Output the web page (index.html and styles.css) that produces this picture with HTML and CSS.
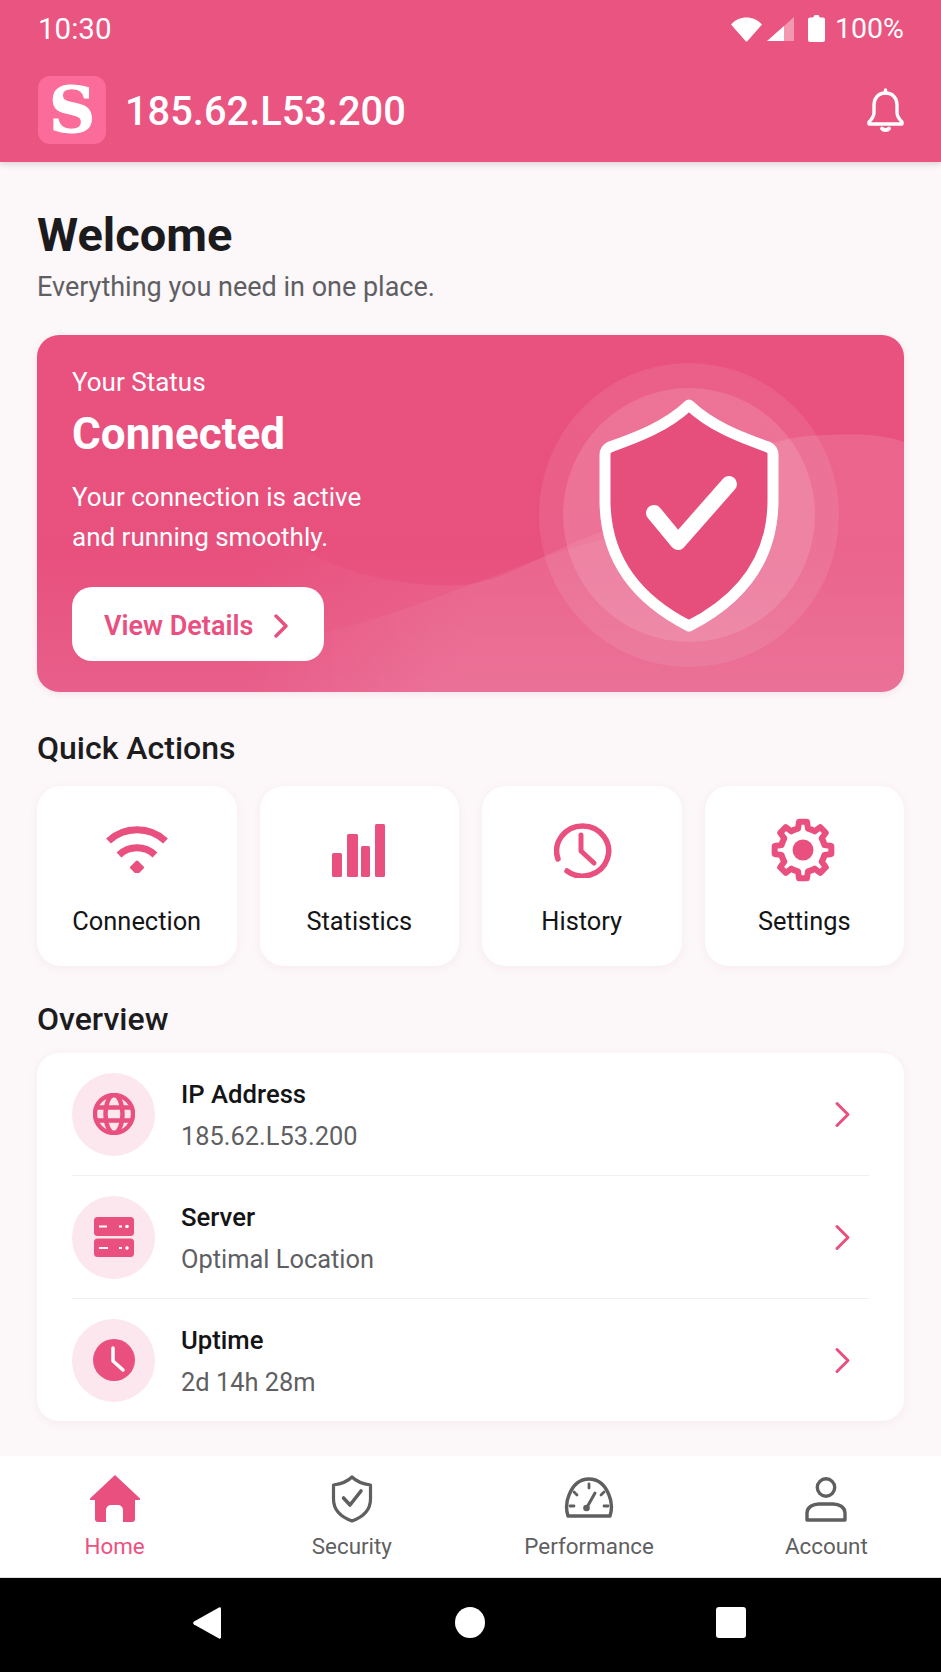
FILE: index.html
```html
<!DOCTYPE html>
<html lang="en">
<head>
<meta charset="utf-8">
<title>Home</title>
<link rel="stylesheet" href="styles.css">
</head>
<body>
<div class="app">
  <header class="top">
    <div class="status">
      <span class="status-text status-time">10:30</span>
      <div class="status-right">
        <svg class="ic-wifi" viewBox="0 0 31 25"><path fill="#fff" d="M0 7.500C4 3 9.500 .5 15.500 .5S27 3 31 7.500L16.500 24a1.300 1.300 0 0 1-2 0Z"/></svg>
        <svg class="ic-signal" viewBox="0 0 27 24"><path fill="#fff" fill-opacity=".4" d="M27 0v24H17V9Z"/><path fill="#fff" d="M17 9v15H0Z"/></svg>
        <svg class="ic-battery" viewBox="0 0 17 27"><path fill="#fff" d="M5 2.500a1 1 0 0 1 1-1V1a1 1 0 0 1 1-1h3a1 1 0 0 1 1 1v.5a1 1 0 0 1 1 1h3a2 2 0 0 1 2 2V25a2 2 0 0 1-2 2H2a2 2 0 0 1-2-2V4.500a2 2 0 0 1 2-2Z"/></svg>
        <span class="status-text">100%</span>
      </div>
    </div>
    <div class="appbar">
      <div class="logo">S</div>
      <div class="ip">185.62.L53.200</div>
      <svg class="ic-bell" viewBox="0 0 37 44" fill="none" stroke="#fff" stroke-width="3.400" stroke-linejoin="round" stroke-linecap="round"><path d="M18.500 5C11 5 7 10.500 7 17v7.500c0 4-2 6.500-5 9.500v2h33v-2c-3-3-5-5.500-5-9.500V17c0-6.500-4-12-11.500-12Z"/><path d="M18.500 2v3"/><path d="M15 40.500c1.500 2 5.500 2 7 0" stroke-width="3.800"/></svg>
    </div>
  </header>

  <main class="main">
    <h1 class="welcome">Welcome</h1>
    <p class="sub">Everything you need in one place.</p>

    <section class="hero">
      <svg class="hero-art" viewBox="0 0 867 357" preserveAspectRatio="none">
        <defs>
          <linearGradient id="wave-fade" x1="0" y1="0" x2="1" y2="0">
            <stop offset="0" stop-color="#fff" stop-opacity="0"/>
            <stop offset=".35" stop-color="#fff" stop-opacity=".07"/>
            <stop offset="1" stop-color="#fff" stop-opacity=".07"/>
          </linearGradient>
          <linearGradient id="wave-fade-low" x1="0" y1="0" x2="1" y2="0">
            <stop offset=".25" stop-color="#fff" stop-opacity="0"/>
            <stop offset=".45" stop-color="#fff" stop-opacity=".05"/>
            <stop offset="1" stop-color="#fff" stop-opacity=".05"/>
          </linearGradient>
        </defs>
        <path fill="url(#wave-fade)" d="M200 357V200C240 205 265 215 283 223C330 245 380 252 425 250C470 246 510 215 570 195C640 170 690 100 790 100C820 98 850 100 867 107V357Z"/>
        <path fill="url(#wave-fade-low)" d="M0 357C100 345 200 320 288 297C400 270 470 230 563 205C640 175 700 100 790 100C820 98 850 100 867 107V357Z"/>
        <ellipse cx="652" cy="180" rx="150" ry="152" fill="#fff" fill-opacity=".09"/>
        <ellipse cx="652" cy="180" rx="126" ry="127" fill="#fff" fill-opacity=".12"/>
        <path fill="#E64E7C" stroke="#fff" stroke-width="11" stroke-linejoin="round" d="M652 70C630 91 601 102 573 112C569 114 568 116 568 120V165C568 220 595 262 652 291C709 262 736 220 736 165V120C736 116 735 114 731 112C703 102 674 91 652 70Z"/>
        <path fill="none" stroke="#fff" stroke-width="16" stroke-linejoin="round" stroke-linecap="round" d="M617 178L641 207L692 149"/>
      </svg>
      <div class="hero-body">
        <div class="hero-label">Your Status</div>
        <h2 class="hero-title">Connected</h2>
        <p class="hero-desc">Your connection is active<br>and running smoothly.</p>
        <a class="hero-btn">View Details
          <svg class="ic-btn-chev" viewBox="0 0 16 24" fill="none" stroke="#E9507F" stroke-width="3.400" stroke-linecap="round" stroke-linejoin="round"><path d="M3 2l10 10L3 22"/></svg>
        </a>
      </div>
    </section>

    <h3 class="section-title quick">Quick Actions</h3>
    <div class="actions">
      <div class="action">
        <div class="action-icon">
          <svg class="ic-a-wifi" viewBox="0 0 62 47" fill="none" stroke="#E9507F" stroke-width="7"><path d="M2.500 15A42 42 0 0 1 59.500 15"/><path d="M13 29A26 26 0 0 1 49 29"/><path fill="#E9507F" stroke="#E9507F" stroke-width="3" stroke-linejoin="round" d="M31 36l5.500 5.500-5.500 5.500-5.500-5.500Z"/></svg>
        </div>
        <span class="action-label">Connection</span>
      </div>
      <div class="action">
        <div class="action-icon">
          <svg class="ic-a-bars" viewBox="0 0 53 53" fill="#E9507F"><rect y="29" width="10" height="24" rx="1.500"/><rect x="15" y="10" width="11" height="43" rx="1.500"/><rect x="29" y="22" width="9" height="31" rx="1.500"/><rect x="43" width="10" height="53" rx="1.500"/></svg>
        </div>
        <span class="action-label">Statistics</span>
      </div>
      <div class="action">
        <div class="action-icon">
          <svg class="ic-a-clock" viewBox="0 0 58 56" fill="none" stroke="#E9507F" stroke-width="5.500" stroke-linecap="round" stroke-linejoin="round"><path d="M4 37A26 25 0 1 1 13 49"/><path d="M27 13v16l13 12" stroke-width="5"/></svg>
        </div>
        <span class="action-label">History</span>
      </div>
      <div class="action">
        <div class="action-icon">
          <svg class="ic-a-gear" viewBox="0 0 60 60">
            <defs><path id="gear-seg" fill="none" stroke="#E9507F" stroke-width="5.500" stroke-linejoin="round" stroke-linecap="round" d="M22.350 11.520L25.500 10.510L26.380 4.250H33.620L34.500 10.510L37.650 11.520"/></defs>
            <use href="#gear-seg"/>
            <use href="#gear-seg" transform="rotate(45 30 30)"/>
            <use href="#gear-seg" transform="rotate(90 30 30)"/>
            <use href="#gear-seg" transform="rotate(135 30 30)"/>
            <use href="#gear-seg" transform="rotate(180 30 30)"/>
            <use href="#gear-seg" transform="rotate(225 30 30)"/>
            <use href="#gear-seg" transform="rotate(270 30 30)"/>
            <use href="#gear-seg" transform="rotate(315 30 30)"/>
            <circle cx="30" cy="30" r="9.500" fill="#E9507F"/>
          </svg>
        </div>
        <span class="action-label">Settings</span>
      </div>
    </div>

    <h3 class="section-title over">Overview</h3>
    <div class="list">
      <div class="row">
        <div class="row-icon">
          <svg class="ic-r" viewBox="0 0 42 42" fill="none" stroke="#E9507F" stroke-width="4.400"><circle cx="21" cy="21" r="19"/><ellipse cx="21" cy="21" rx="8.500" ry="19"/><path d="M3.500 14.500h35M3.500 27.500h35"/></svg>
        </div>
        <div class="row-text"><div class="row-title">IP Address</div><div class="row-value">185.62.L53.200</div></div>
        <svg class="ic-chev" viewBox="0 0 17 27" fill="none" stroke="#E9507F" stroke-width="3" stroke-linecap="round" stroke-linejoin="round"><path d="M3 2.500l11 11-11 11"/></svg>
      </div>
      <div class="row">
        <div class="row-icon">
          <svg class="ic-r" viewBox="0 0 42 42"><rect x="1" y="1" width="40" height="19" rx="3.500" fill="#E9507F"/><rect x="1" y="22.500" width="40" height="18.500" rx="3.500" fill="#E9507F"/><path d="M6 10.500h8M26 10.500h3M6 32h9M26 32h3" stroke="#fff" stroke-width="2" fill="none"/><circle cx="34" cy="10.500" r="1.800" fill="#fff"/><circle cx="34" cy="32" r="1.800" fill="#fff"/></svg>
        </div>
        <div class="row-text"><div class="row-title">Server</div><div class="row-value">Optimal Location</div></div>
        <svg class="ic-chev" viewBox="0 0 17 27" fill="none" stroke="#E9507F" stroke-width="3" stroke-linecap="round" stroke-linejoin="round"><path d="M3 2.500l11 11-11 11"/></svg>
      </div>
      <div class="row">
        <div class="row-icon">
          <svg class="ic-r" viewBox="0 0 42 42"><circle cx="21" cy="21" r="21" fill="#E9507F"/><path d="M20 9v13l10 9" fill="none" stroke="#fff" stroke-width="3.500" stroke-linecap="round" stroke-linejoin="round"/></svg>
        </div>
        <div class="row-text"><div class="row-title">Uptime</div><div class="row-value">2d 14h 28m</div></div>
        <svg class="ic-chev" viewBox="0 0 17 27" fill="none" stroke="#E9507F" stroke-width="3" stroke-linecap="round" stroke-linejoin="round"><path d="M3 2.500l11 11-11 11"/></svg>
      </div>
    </div>
  </main>

  <nav class="tabs">
    <div class="tab tab-active">
      <svg class="tab-icon" viewBox="0 0 50 48"><path fill="#E9507F" d="M25 0L49.500 23a1 1 0 0 1-.8 2H45V44a3 3 0 0 1-3 3H33V35a5 5 0 0 0-5-5H21a5 5 0 0 0-5 5V47H8a3 3 0 0 1-3-3V25H1.300a1 1 0 0 1-.8-2Z"/></svg>
      <span>Home</span>
    </div>
    <div class="tab">
      <svg class="tab-icon" viewBox="0 0 50 48" fill="none" stroke="#5F5F62" stroke-width="3.200" stroke-linejoin="round" stroke-linecap="round"><path d="M25 2C20 7 14 9 6.500 10V24C6.500 35 14 42 25 46C36 42 43.500 35 43.500 24V10C36 9 30 7 25 2Z"/><path d="M16.500 23l6.500 7 11-14" stroke-width="3.600"/></svg>
      <span>Security</span>
    </div>
    <div class="tab">
      <svg class="tab-icon" viewBox="0 0 50 48" fill="none" stroke="#5F5F62" stroke-width="3.400" stroke-linejoin="round" stroke-linecap="round"><path d="M4 41C1.500 33 2 27 5 20C9 10 16 4 25 4S41 10 45 20C48 27 48.500 33 46 41Z"/><path d="M25 9v4M10 17l3 3M40 17l-3 3M6 31h4M40 31h4" stroke-width="2.800"/><path d="M22 34L31 18" stroke-width="3"/><circle cx="22.500" cy="33" r="3.300" fill="#5F5F62" stroke="none"/></svg>
      <span>Performance</span>
    </div>
    <div class="tab">
      <svg class="tab-icon" viewBox="0 0 50 48" fill="none" stroke="#5F5F62" stroke-width="3.400" stroke-linejoin="round"><circle cx="25" cy="12.500" r="8.700"/><path d="M6 45V38C6 32 12 29 18 29H32C38 29 44 32 44 38V45Z"/></svg>
      <span>Account</span>
    </div>
  </nav>

  <div class="sysnav">
    <svg class="sys-back" viewBox="0 0 28 32"><path fill="#fff" d="M26 .5a1.500 1.500 0 0 1 2 1.200V30.300a1.500 1.500 0 0 1-2 1.200L1 17.500a2 2 0 0 1 0-3Z"/></svg>
    <span class="sys-home"></span>
    <span class="sys-recent"></span>
  </div>
</div>
</body>
</html>
```

FILE: styles.css
```css
* { box-sizing: border-box; }
html, body { margin: 0; padding: 0; }
body { font-family: Roboto, "Liberation Sans", sans-serif; background: #FCF7F9; color: #1C1C1E; }
h1, h2, h3, p { margin: 0; font-weight: inherit; }

.app { width: 941px; height: 1672px; display: flex; flex-direction: column; overflow: hidden; }

.top { height: 162px; background: #E95480; color: #fff; box-shadow: 0 2px 6px rgba(120, 60, 80, .22); position: relative; z-index: 2; flex: none; }
.status { height: 58px; padding: 0 37px 0 38px; display: flex; align-items: center; justify-content: space-between; }
.status-text { font-size: 28.500px; line-height: 32px; }
.status-time { font-size: 29.500px; }
.status-right { display: flex; align-items: center; }
.ic-wifi { width: 31px; height: 25px; }
.ic-signal { width: 27px; height: 24px; margin-left: 5px; }
.ic-battery { width: 17px; height: 27px; margin-left: 14px; margin-top: -2px; }
.status-right .status-text { margin-left: 10px; }

.appbar { height: 104px; padding: 18px 37px 18px 38px; display: flex; align-items: center; }
.logo { width: 68px; height: 68px; border-radius: 12px; background: #FB6C9A; font-family: "DejaVu Serif", serif; font-weight: 700; font-size: 64px; line-height: 68px; text-align: center; flex: none; -webkit-text-stroke: 1px #fff; }
.ip { margin-left: 19px; padding-top: 4px; font-size: 39.800px; font-weight: 500; line-height: 48px; flex: 1; }
.ic-bell { width: 37px; height: 44px; }

.main { flex: 1; padding: 49px 37px 0; min-height: 0; }
.welcome { font-size: 47px; font-weight: 700; line-height: 48px; color: #1B1B1D; }
.sub { font-size: 27px; line-height: 32px; color: #5F5F63; margin: 12px 0 0; }

.hero { position: relative; margin-top: 32px; border-radius: 22px; overflow: hidden; background: linear-gradient(180deg, #E9517E 0%, #E8507E 60%, #E85F8B 100%); color: #fff; box-shadow: 0 2px 6px rgba(200, 90, 130, .12); }
.hero-art { position: absolute; inset: 0; width: 100%; height: 100%; }
.hero-body { position: relative; padding: 32px 35px 31px; }
.hero-label { font-size: 26px; line-height: 30px; }
.hero-title { font-size: 44px; font-weight: 700; line-height: 50px; margin-top: 12px; }
.hero-desc { font-size: 26px; line-height: 40px; margin-top: 18px; }
.hero-btn { display: flex; align-items: center; width: 252px; height: 74px; margin-top: 30px; padding: 3px 0 0 32px; background: #fff; border-radius: 20px; color: #E9507F; font-size: 27px; font-weight: 600; }
.ic-btn-chev { width: 16px; height: 24px; margin-left: 20px; }

.section-title { font-size: 32px; font-weight: 500; line-height: 40px; color: #1C1C1E; }
.quick { margin-top: 36px; }
.over { margin-top: 33px; }

.actions { display: grid; grid-template-columns: repeat(4, 1fr); gap: 23px; margin-top: 18px; }
.action { height: 180px; background: #fff; border-radius: 24px; box-shadow: 0 2px 8px rgba(200, 120, 150, .09); display: flex; flex-direction: column; align-items: center; padding-top: 34px; }
.action-icon { height: 60px; display: flex; align-items: center; justify-content: center; }
.action-label { font-size: 25.400px; line-height: 30px; margin-top: 26px; color: #141416; }
.ic-a-wifi { width: 62px; height: 47px; margin-top: -2px; }
.ic-a-bars { width: 53px; height: 53px; margin-left: -2px; }
.ic-a-clock { width: 58px; height: 56px; margin-left: 2px; }
.ic-a-gear { width: 66px; height: 66px; margin-left: -2px; flex: none; }

.list { margin-top: 14px; background: #fff; border-radius: 22px; box-shadow: 0 2px 8px rgba(200, 120, 150, .09); padding: 0 35px; }
.row { height: 122px; display: flex; align-items: center; }
.row + .row { height: 123px; border-top: 1px solid #F1EEF0; }
.row-icon { width: 83px; height: 83px; border-radius: 50%; background: #FBE7ED; display: flex; align-items: center; justify-content: center; flex: none; }
.ic-r { width: 42px; height: 42px; }
.row-text { flex: 1; margin-left: 26px; padding-top: 1px; }
.row-title { font-size: 25.700px; font-weight: 500; line-height: 32px; color: #141416; }
.row-value { font-size: 25.400px; line-height: 32px; margin-top: 10px; color: #5F5F63; }
.ic-chev { width: 17px; height: 27px; margin-right: 18px; }

.tabs { height: 122px; background: #fff; display: grid; grid-template-columns: repeat(4, 1fr); margin: 0 -4px; border-bottom: 1px solid #ddd; flex: none; padding-top: 19px; color: #5F5F62; }
.tab { display: flex; flex-direction: column; align-items: center; font-size: 22.400px; line-height: 28px; }
.tab-icon { width: 50px; height: 48px; margin-bottom: 9px; }
.tab-active { color: #F0507F; }

.sysnav { height: 94px; background: #000; flex: none; display: flex; align-items: center; padding-left: 193px; padding-bottom: 5px; }
.sys-back { width: 28px; height: 32px; }
.sys-home { width: 30px; height: 31px; border-radius: 50%; background: #fff; margin-left: 234px; }
.sys-recent { width: 30px; height: 31px; border-radius: 3px; background: #fff; margin-left: 231px; }
```
